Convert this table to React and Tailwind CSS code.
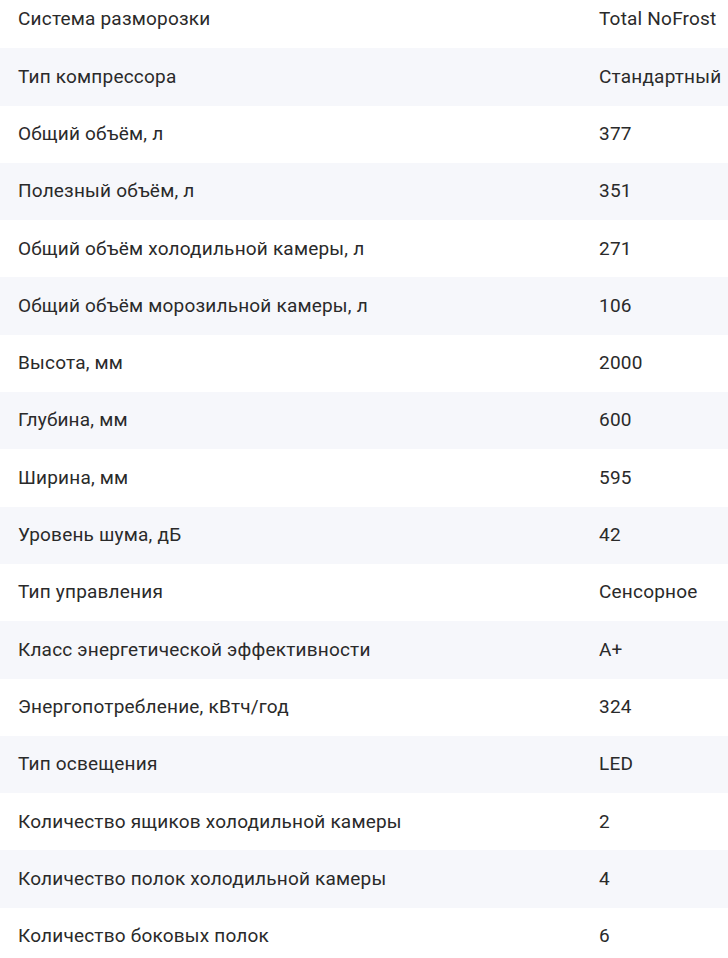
import React from "react";

// Характеристики холодильника
const specs = [
  ["Система разморозки", "Total NoFrost"],
  ["Тип компрессора", "Стандартный"],
  ["Общий объём, л", "377"],
  ["Полезный объём, л", "351"],
  ["Общий объём холодильной камеры, л", "271"],
  ["Общий объём морозильной камеры, л", "106"],
  ["Высота, мм", "2000"],
  ["Глубина, мм", "600"],
  ["Ширина, мм", "595"],
  ["Уровень шума, дБ", "42"],
  ["Тип управления", "Сенсорное"],
  ["Класс энергетической эффективности", "A+"],
  ["Энергопотребление, кВтч/год", "324"],
  ["Тип освещения", "LED"],
  ["Количество ящиков холодильной камеры", "2"],
  ["Количество полок холодильной камеры", "4"],
  ["Количество боковых полок", "6"],
];

const App = () => {
  return (
    <div className="w-[728px] h-[958px] overflow-hidden bg-white text-[#2a2a2a] font-['Roboto',sans-serif] text-[19px] tracking-[0.2px]">
      <div className="-mt-[9px]">
        {specs.map(([label, value], i) => (
          <div
            key={label}
            className={`flex items-center h-[57.3px] ${i % 2 === 1 ? "bg-[#f6f7fb]" : "bg-white"}`}
          >
            <div className="w-[599px] shrink-0 pl-[18px] whitespace-nowrap">{label}</div>
            <div className="whitespace-nowrap">{value}</div>
          </div>
        ))}
      </div>
    </div>
  );
};

export default App;
